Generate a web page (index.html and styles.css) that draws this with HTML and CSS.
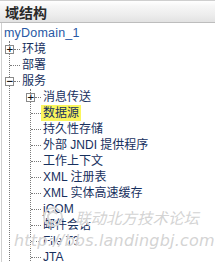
FILE: index.html
```html
<!DOCTYPE html>
<html lang="zh">
<head>
<meta charset="utf-8">
<title>域结构</title>
<link rel="stylesheet" href="styles.css">
</head>
<body>
<div class="panel">
  <div class="header">域结构</div>
  <div class="tree">
    <div class="root">myDomain_1</div>
    <ul class="lvl1">
      <li><div class="row"><span class="tog">+</span><span class="dash short"></span><span class="lbl">环境</span></div></li>
      <li><div class="row"><span class="dash long"></span><span class="lbl">部署</span></div></li>
      <li>
        <div class="row"><span class="tog">−</span><span class="dash short"></span><span class="lbl">服务</span></div>
        <ul class="lvl2">
          <li><div class="row"><span class="tog">+</span><span class="dash short"></span><span class="lbl">消息传送</span></div></li>
          <li><div class="row"><span class="dash long"></span><span class="lbl sel">数据源</span></div></li>
          <li><div class="row"><span class="dash long"></span><span class="lbl">持久性存储</span></div></li>
          <li><div class="row"><span class="dash long"></span><span class="lbl">外部 JNDI 提供程序</span></div></li>
          <li><div class="row"><span class="dash long"></span><span class="lbl">工作上下文</span></div></li>
          <li><div class="row"><span class="dash long"></span><span class="lbl">XML 注册表</span></div></li>
          <li><div class="row"><span class="dash long"></span><span class="lbl">XML 实体高速缓存</span></div></li>
          <li><div class="row"><span class="dash long"></span><span class="lbl">jCOM</span></div></li>
          <li><div class="row"><span class="dash long"></span><span class="lbl">邮件会话</span></div></li>
          <li><div class="row"><span class="dash long"></span><span class="lbl">File T3</span></div></li>
          <li><div class="row"><span class="dash long"></span><span class="lbl">JTA</span></div></li>
        </ul>
      </li>
    </ul>
  </div>
  <div class="watermark">
    <svg class="wm-logo" width="22" height="22" viewBox="0 0 22 22">
      <circle cx="11" cy="11" r="9" fill="none" stroke="#d8d8d8" stroke-width="2"/>
      <path d="M15 8 A5 5 0 1 0 15 14" fill="none" stroke="#d8d8d8" stroke-width="2"/>
    </svg>
    <span class="wm-cn">联动北方技术论坛</span>
    <span class="wm-url">http://bbs.landingbj.com</span>
  </div>
</div>
</body>
</html>
```
FILE: styles.css
```css
html, body {
  margin: 0;
  padding: 0;
  background: #ffffff;
}
.panel {
  position: relative;
  width: 215px;
  height: 262px;
  overflow: hidden;
  font-family: "Liberation Sans", "Noto Sans CJK SC", sans-serif;
  font-size: 12px;
  color: #17305e;
}
.header {
  height: 21px;
  border-top: 1px solid #cfcfcf;
  border-bottom: 1px solid #bdbdbd;
  background: linear-gradient(#ffffff 0%, #f6f6f6 25%, #ececec 70%, #e2e2e2 100%);
  padding-left: 5px;
  font-family: "Noto Sans CJK SC", sans-serif;
  font-weight: bold;
  font-size: 14px;
  line-height: 22px;
  color: #2a2a2a;
}
.tree {
  border-left: 1px solid #d0d0d0;
  margin-left: 1px;
  padding-top: 2px;
  height: 240px;
}
.root {
  height: 16px;
  line-height: 16px;
  padding-left: 2px;
  font-size: 12.5px;
  letter-spacing: 0.2px;
  color: #2858a4;
}
ul {
  list-style: none;
  margin: 0;
  padding: 0;
}
.lvl1 {
  margin-left: 7px;
  border-left: 1px dotted #7a7a7a;
}
.lvl2 {
  margin-left: 20px;
  border-left: 1px dotted #7a7a7a;
}
.row {
  display: flex;
  align-items: center;
  height: 16px;
}
.tog {
  flex: none;
  width: 7px;
  height: 7px;
  margin-left: -5px;
  border: 1px solid #8a8a8a;
  background: #ffffff;
  color: #111;
  font-family: "DejaVu Sans", sans-serif;
  font-size: 9px;
  line-height: 7px;
  text-align: center;
  font-weight: bold;
  overflow: hidden;
}
.dash {
  flex: none;
  height: 0;
  border-top: 1px dotted #7a7a7a;
}
.dash.short { width: 6px; }
.dash.long { width: 10px; }
.lbl {
  margin-left: 2px;
  line-height: 16px;
  white-space: nowrap;
  font-size: 12px;
}
.lbl.sel {
  background: #fbf65c;
  margin-left: 0;
  padding: 0 2px;
}
.watermark {
  position: absolute;
  left: 0;
  top: 0;
  width: 215px;
  height: 262px;
  pointer-events: none;
}
.wm-logo {
  position: absolute;
  left: 42px;
  top: 206px;
}
.wm-cn {
  position: absolute;
  left: 75px;
  top: 206px;
  font-family: "Noto Sans CJK SC", sans-serif;
  font-size: 15.5px;
  font-style: italic;
  color: rgba(200, 200, 200, 0.8);
  text-shadow: 0 0 1px #fff, 1px 1px 0 #fff;
}
.wm-url {
  position: absolute;
  left: 14px;
  top: 231px;
  font-family: "DejaVu Sans", sans-serif;
  font-size: 16px;
  font-style: italic;
  letter-spacing: 0.2px;
  white-space: nowrap;
  color: rgba(200, 200, 200, 0.8);
  text-shadow: 0 0 1px #fff, 1px 1px 0 #fff;
}
```
